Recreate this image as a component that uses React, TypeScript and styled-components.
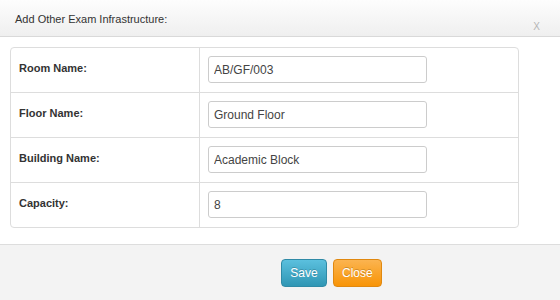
import React from "react";
import styled, { createGlobalStyle } from "styled-components";

const GlobalStyle = createGlobalStyle`
  html, body {
    margin: 0;
    padding: 0;
    background: #ffffff;
  }
  body {
    font-family: Tahoma, "Liberation Sans", Arial, sans-serif;
    font-size: 11px;
    color: #333;
  }
`;

const Modal = styled.div`
  width: 560px;
  height: 300px;
  display: flex;
  flex-direction: column;
  background: #fff;
  overflow: hidden;
`;

const Header = styled.div`
  height: 36px;
  flex: none;
  display: flex;
  align-items: flex-start;
  justify-content: space-between;
  padding: 0 15px;
  background: linear-gradient(to bottom, #fdfdfd, #efefef);
  border-bottom: 1px solid #d9d9d9;
`;

const Title = styled.h3`
  margin: 0;
  padding-top: 13px;
  font-size: 11px;
  font-weight: normal;
  color: #333;
`;

const CloseX = styled.span`
  padding-top: 21px;
  margin-right: 5px;
  font-size: 10px;
  color: #b5b5b5;
`;

const Body = styled.div`
  height: 207px;
  flex: none;
  padding: 10px 41px 0 10px;
  box-sizing: border-box;
`;

const Table = styled.div`
  display: grid;
  grid-template-columns: 189px 1fr;
  border: 1px solid #dddddd;
  border-radius: 4px;
  overflow: hidden;
`;

const Label = styled.div<{ $last?: boolean }>`
  height: ${(p) => (p.$last ? "44px" : "45px")};
  padding: 14px 0 0 8px;
  box-sizing: border-box;
  font-weight: bold;
  font-size: 11px;
  color: #333;
  border-right: 1px solid #dddddd;
  border-bottom: ${(p) => (p.$last ? "none" : "1px solid #dddddd")};
`;

const Cell = styled.div<{ $last?: boolean }>`
  height: ${(p) => (p.$last ? "44px" : "45px")};
  padding: 8px 0 0 8px;
  box-sizing: border-box;
  border-bottom: ${(p) => (p.$last ? "none" : "1px solid #dddddd")};
`;

const Input = styled.input`
  width: 219px;
  height: 27px;
  box-sizing: border-box;
  padding: 0 5px;
  border: 1px solid #cccccc;
  border-radius: 3px;
  font-family: Tahoma, "Liberation Sans", Arial, sans-serif;
  font-size: 12px;
  color: #444;
  background: #fff;
  outline: none;
`;

const Footer = styled.div`
  flex: 1;
  display: flex;
  align-items: flex-start;
  gap: 6px;
  padding: 14px 0 0 281px;
  box-sizing: border-box;
  background: #f3f3f3;
  border-top: 1px solid #dddddd;
`;

const Button = styled.button<{ $tone: "info" | "warning" }>`
  height: 28px;
  min-width: 46px;
  padding: 0 8px;
  border-radius: 4px;
  font-family: Tahoma, "Liberation Sans", Arial, sans-serif;
  font-size: 12px;
  color: #fff;
  text-shadow: 0 -1px 0 rgba(0, 0, 0, 0.2);
  cursor: pointer;
  border: 1px solid
    ${(p) => (p.$tone === "info" ? "#2f8aa6" : "#e0880f")};
  background: ${(p) =>
    p.$tone === "info"
      ? "linear-gradient(to bottom, #5bc0de, #2f96b4)"
      : "linear-gradient(to bottom, #fbb450, #f89406)"};
`;

const rows = [
  { label: "Room Name:", value: "AB/GF/003" },
  { label: "Floor Name:", value: "Ground Floor" },
  { label: "Building Name:", value: "Academic Block" },
  { label: "Capacity:", value: "8" },
];

export default function App() {
  return (
    <>
      <GlobalStyle />
      <Modal>
        <Header>
          <Title>Add Other Exam Infrastructure:</Title>
          <CloseX>X</CloseX>
        </Header>
        <Body>
          <Table>
            {rows.map((r, i) => (
              <React.Fragment key={r.label}>
                <Label $last={i === rows.length - 1}>{r.label}</Label>
                <Cell $last={i === rows.length - 1}>
                  <Input defaultValue={r.value} />
                </Cell>
              </React.Fragment>
            ))}
          </Table>
        </Body>
        <Footer>
          <Button $tone="info">Save</Button>
          <Button $tone="warning">Close</Button>
        </Footer>
      </Modal>
    </>
  );
}
